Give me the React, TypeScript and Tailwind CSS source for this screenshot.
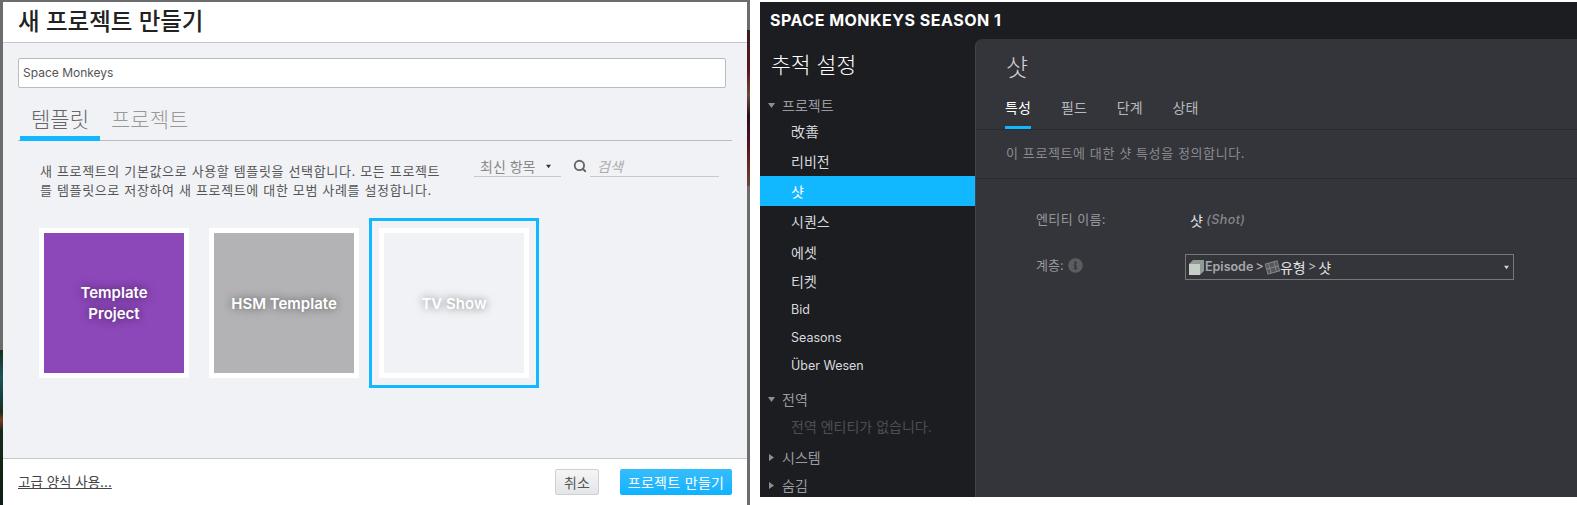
import { Search } from 'lucide-react';
import { FaInfoCircle } from 'react-icons/fa';

const NAV_ITEMS = [
  { label: '改善', h: 'h-[30px]', text: 'text-[14px]' },
  { label: '리비전', h: 'h-[30px]', text: 'text-[14px]' },
  { label: '샷', h: 'h-[30px]', text: 'text-[14px]', active: true },
  { label: '시퀀스', h: 'h-[31px]', text: 'text-[14px]' },
  { label: '에셋', h: 'h-[30px]', text: 'text-[14px]' },
  { label: '티켓', h: 'h-[29px]', text: 'text-[14px]' },
  { label: 'Bid', h: 'h-[28px]', text: 'text-[12.5px]' },
  { label: 'Seasons', h: 'h-[28px]', text: 'text-[12.5px]' },
  { label: 'Über Wesen', h: 'h-[28px]', text: 'text-[12.5px]' },
];

const TEMPLATES = [
  { name: 'Template\nProject', bg: 'bg-[#8c47b8]' },
  { name: 'HSM Template', bg: 'bg-[#b3b3b5]' },
  { name: 'TV Show', bg: 'bg-[#f1f2f6]', selected: true },
];

function Caret({ open, size = 7, className }: { open: boolean; size?: number; className?: string }) {
  return (
    <svg width={size} height={size} viewBox="0 0 7 7" className={className}>
      <path d={open ? 'M0 1h7L3.5 6z' : 'M1 0l5 3.5L1 7z'} fill="currentColor" />
    </svg>
  );
}

function Section({ open, label }: { open: boolean; label: string }) {
  return (
    <div className="flex h-[28px] items-center pl-[8px] text-[14px] text-[#9a9ba0]">
      <Caret open={open} className="mr-[7px] text-[#8d8e94]" />
      {label}
    </div>
  );
}

function CubeIcon() {
  return (
    <svg width="17" height="17" viewBox="0 0 17 17" className="blur-[0.5px]">
      <path d="M1 5l4-4h11v11l-4 4H1z" fill="#8f9a92" />
      <path d="M1 5h11v11H1z" fill="#c4cec6" />
    </svg>
  );
}

function FilmIcon() {
  return (
    <svg width="15" height="15" viewBox="0 0 16 16" className="ml-[1px] rotate-[-15deg]">
      <rect x="1.5" y="2.5" width="13" height="11" fill="#55565a" stroke="#85868a" />
      <path d="M1.5 8h13M5 2.5v11M11 2.5v11" stroke="#85868a" />
    </svg>
  );
}

function ModalPanel() {
  return (
    <div className="flex w-[744px] flex-col bg-white">
      <div className="flex h-[41px] shrink-0 items-center border-b border-[#c8c9cf] pl-[15px] text-[23.5px] font-medium text-[#222]">
        새 프로젝트 만들기
      </div>
      <div className="flex flex-1 flex-col bg-[#f1f2f6] px-[15px] pt-[15px]">
        <div className="flex h-[30px] w-[708px] items-center rounded-[2px] border border-[#b9bac2] bg-white pl-[4px] text-[12px] text-[#555]">
          Space Monkeys
        </div>
        <div className="mt-[16px] flex h-[37px] w-[714px] items-start gap-[11px] border-b border-[#b9bac2] pl-[2px] text-[21px] font-light">
          <div className="flex h-[37px] w-[80px] items-start justify-center border-b-[5px] border-[#12b8ff] text-[#666]">
            템플릿
          </div>
          <div className="text-[#999]">프로젝트</div>
        </div>
        <div className="mt-[15px] flex">
          <p className="ml-[22px] mt-[6px] w-[404px] whitespace-nowrap text-[13px] leading-[19px] tracking-[0.65px] text-[#555]">
            새 프로젝트의 기본값으로 사용할 템플릿을 선택합니다. 모든 프로젝트
            <br />
            를 템플릿으로 저장하여 새 프로젝트에 대한 모범 사례를 설정합니다.
          </p>
          <div className="ml-[30px] flex h-[21px] w-[87px] items-center justify-between border-b border-[#c8c9cf] pl-[6px] pr-[10px] text-[14px] text-[#888]">
            최신 항목
            <Caret open size={5} className="text-[#333]" />
          </div>
          <Search size={14} strokeWidth={3.2} className="ml-[12px] mt-[3px] text-[#666]" />
          <div className="ml-[3px] flex h-[21px] w-[129px] items-center border-b border-[#c8c9cf] pl-[7px] text-[14px] italic text-[#aaa]">
            검색
          </div>
        </div>
        <div className="ml-[11px] mt-[18px] flex">
          {TEMPLATES.map((t) => (
            <div
              key={t.name}
              className={`h-[170px] w-[170px] border-[3px] p-[7px] ${t.selected ? 'border-[#12b8ff]' : 'border-transparent'}`}
            >
              <div className={`flex h-[150px] items-center justify-center whitespace-pre-line border-[5px] border-white text-center text-[15px] font-semibold leading-[21px] text-white [text-shadow:0_0_8px_rgba(0,0,0,0.55)] ${t.bg}`}>
                {t.name}
              </div>
            </div>
          ))}
        </div>
      </div>
      <div className="flex h-[47px] shrink-0 items-center border-t border-[#c8c9cf] pl-[15px] pr-[15px]">
        <span className="text-[13.5px] text-[#444] underline">고급 양식 사용...</span>
        <div className="ml-auto flex h-[26px] w-[44px] items-center justify-center rounded-[2px] border border-[#cfd0d4] bg-gradient-to-b from-[#f5f5f6] to-[#e4e5e8] text-[14px] text-[#555]">
          취소
        </div>
        <div className="ml-[21px] flex h-[26px] w-[112px] items-center justify-center rounded-[2px] bg-gradient-to-b from-[#35bdfb] to-[#0db2ff] text-[14px] tracking-[0.3px] text-white">
          프로젝트 만들기
        </div>
      </div>
    </div>
  );
}

function Sidebar() {
  return (
    <div className="w-[215px] shrink-0">
      <div className="pl-[11px] pt-[10px] text-[21.5px] font-light leading-[32px] text-white">추적 설정</div>
      <div className="mt-[10px]">
        <Section open label="프로젝트" />
        <div className="-mt-[3px]">
          {NAV_ITEMS.map((item) => (
            <div
              key={item.label}
              className={`flex items-center pl-[31px] ${item.text} ${item.h} ${item.active ? 'bg-[#12b8ff] text-white' : 'text-[#d8d9dc]'}`}
            >
              {item.label}
            </div>
          ))}
        </div>
        <div className="mt-[5px]">
          <Section open label="전역" />
        </div>
        <div className="flex h-[26px] items-center pl-[31px] text-[14px] text-[#4d4e53]">전역 엔티티가 없습니다.</div>
        <div className="mt-[4px]">
          <Section open={false} label="시스템" />
        </div>
        <Section open={false} label="숨김" />
      </div>
    </div>
  );
}

function MainPanel() {
  return (
    <div className="flex-1 rounded-tl-[8px] border-l border-[#44454a] bg-[#34353a]">
      <div className="pl-[30px] pt-[11px] text-[24px] font-light leading-[36px] text-[#d0d1d4]">샷</div>
      <div className="mt-[11px] flex h-[33px] gap-[30px] border-b border-[#2a2b2f] pl-[29px] text-[14px] text-[#b8b9bd]">
        <div className="flex h-[32px] w-[26px] items-start justify-center whitespace-nowrap border-b-[3px] border-[#12b8ff] text-white">
          특성
        </div>
        <div>필드</div>
        <div>단계</div>
        <div>상태</div>
      </div>
      <div className="flex h-[49px] items-center border-b border-[#2a2b2f] pl-[30px] text-[13px] tracking-[0.6px] text-[#8a8b90]">
        이 프로젝트에 대한 샷 특성을 정의합니다.
      </div>
      <div className="mt-[31px] flex h-[20px] items-center pl-[60px] text-[13px] tracking-[0.4px] text-[#97989c]">
        <span className="w-[154px]">엔티티 이름:</span>
        <span className="text-[14px] text-[#e0e1e4]">샷</span>
        <span className="ml-[3px] text-[12.5px] font-medium italic text-[#85868a]">(Shot)</span>
      </div>
      <div className="mt-[24px] flex h-[26px] items-center pl-[60px] text-[13px] text-[#97989c]">
        <span className="flex w-[149px] items-center gap-[4px] pb-[3px]">
          계층:
          <FaInfoCircle size={15} className="text-[#5b5c60]" />
        </span>
        <div className="flex h-[26px] w-[329px] items-center border border-[#77787c] pl-[2px] pr-[4px] text-[14px] text-[#e0e1e4]">
          <CubeIcon />
          <span className="text-[12.5px] font-semibold text-[#a8a9ad]">Episode</span>
          <span className="ml-[2px] text-[13px] text-[#b8b9bd]">&gt;</span>
          <FilmIcon />
          <span>유형</span>
          <span className="ml-[2px] text-[13px] text-[#b8b9bd]">&gt;</span>
          <span className="ml-[2px]">샷</span>
          <Caret open size={5} className="ml-auto text-[#d0d1d4]" />
        </div>
      </div>
    </div>
  );
}

export default function App() {
  return (
    <div className="flex h-[505px] w-[1577px] overflow-hidden bg-white font-['Inter','Noto_Sans_CJK_KR',sans-serif]">
      <div className="flex w-[750px] bg-[#6c6c6c] pt-[2px]">
        <div className="flex w-[3px] flex-col">
          <div className="flex-1 bg-[#6c6c6c]" />
          <div className="h-[155px] bg-[linear-gradient(#12301f_0%,#1d5560_18%,#14301f_40%,#7a3a22_45%,#142a18_52%,#0d1f14_100%)]" />
        </div>
        <ModalPanel />
        <div className="flex w-[3px] flex-col">
          <div className="h-[28px] bg-[#6c6c6c]" />
          <div className="h-[156px] bg-[linear-gradient(#3a2020_0%,#5a1420_25%,#6a4a38_42%,#2a1012_55%,#5a1020_75%,#6a4a30_100%)]" />
          <div className="flex-1 bg-[#6c6c6c]" />
        </div>
      </div>
      <div className="ml-[10px] mt-[2px] flex h-[495px] flex-1 flex-col bg-[#1c1d21]">
        <div className="flex h-[35px] shrink-0 items-center pl-[10px] text-[16px] font-bold tracking-[0.5px] text-white">
          SPACE MONKEYS SEASON 1
        </div>
        <div className="mt-[2px] flex min-h-0 flex-1">
          <Sidebar />
          <MainPanel />
        </div>
      </div>
    </div>
  );
}
